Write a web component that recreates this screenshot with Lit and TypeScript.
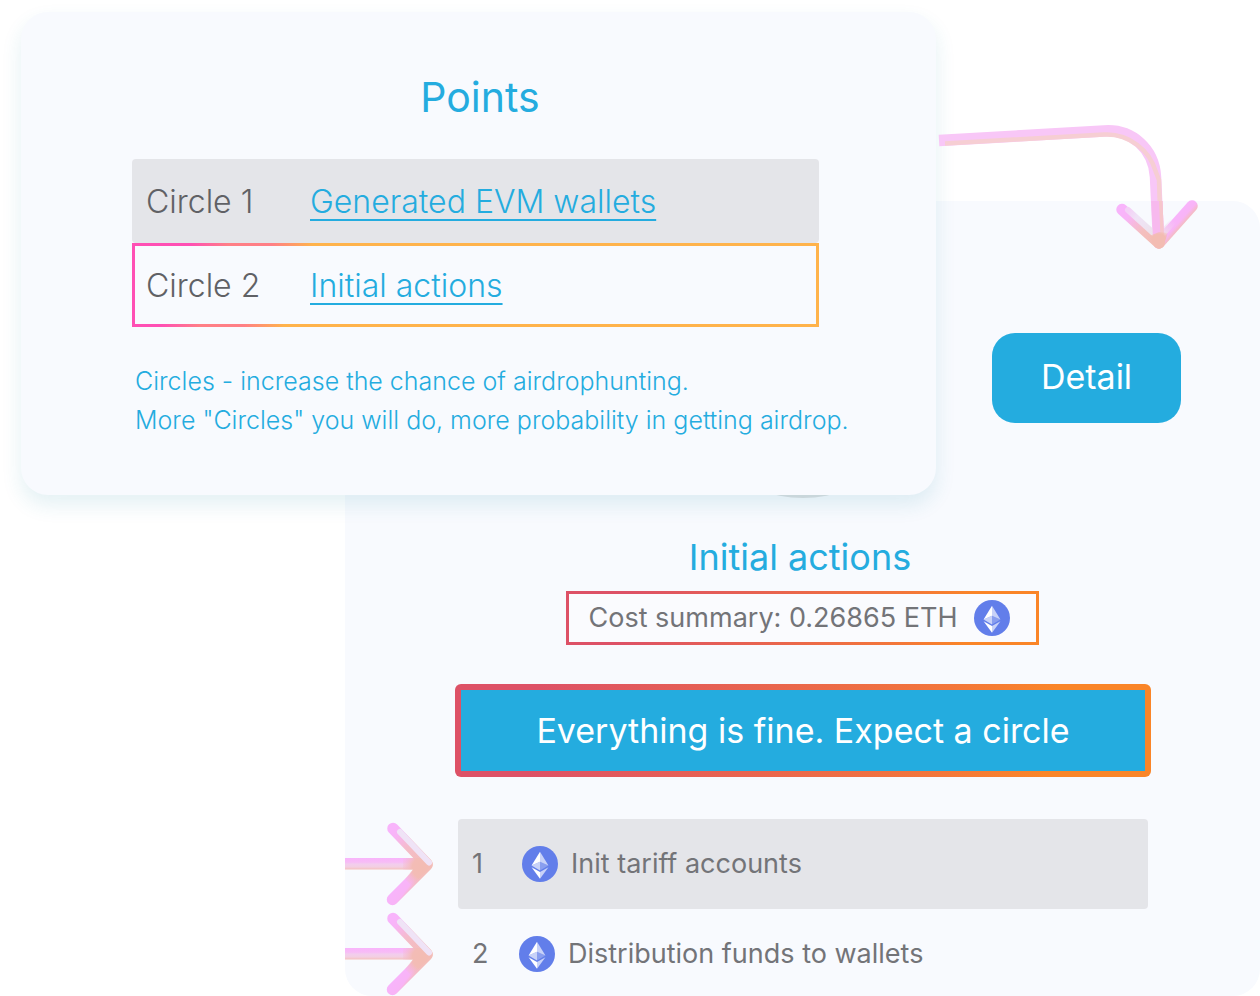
import { LitElement, html, css } from "lit";
import { customElement } from "lit/decorators.js";
import { classMap } from "lit/directives/class-map.js";

interface Circle {
  name: string;
  action: string;
  current: boolean;
}

interface Step {
  label: string;
  active: boolean;
}

const circles: Circle[] = [
  { name: "Circle 1", action: "Generated EVM wallets", current: false },
  { name: "Circle 2", action: "Initial actions", current: true },
];

const steps: Step[] = [
  { label: "Init tariff accounts", active: true },
  { label: "Distribution funds to wallets", active: false },
];

@customElement("eth-icon")
export class EthIcon extends LitElement {
  static styles = css`
    :host {
      display: block;
      flex: none;
      width: 36px;
      height: 36px;
    }
    svg {
      display: block;
      width: 100%;
      height: 100%;
    }
  `;

  render() {
    return html`
      <svg viewBox="0 0 32 32" aria-hidden="true">
        <circle cx="16" cy="16" r="16" fill="#627eea" />
        <g fill="#fff" transform="translate(-0.5 1.2)">
          <path fill-opacity=".65" d="M16.5 4v8.87l7.5 3.35z" />
          <path d="M16.5 4L9 16.22l7.5-3.35z" />
          <path fill-opacity=".65" d="M16.5 21.97v6.03L24 17.62z" />
          <path d="M16.5 28v-6.03L9 17.62z" />
          <path fill-opacity=".25" d="M16.5 20.57l7.5-4.35-7.5-3.35z" />
          <path fill-opacity=".65" d="M9 16.22l7.5 4.35v-7.7z" />
        </g>
      </svg>
    `;
  }
}

/* Short arrow that points from the card edge at a step. */
@customElement("step-arrow")
export class StepArrow extends LitElement {
  static styles = css`
    :host {
      display: block;
    }
    svg {
      display: block;
      width: 113px;
      height: 90px;
    }
  `;

  render() {
    return html`
      <svg viewBox="0 0 113 90" fill="none" aria-hidden="true">
        <defs>
          <linearGradient id="shaft" x1="0" y1="39" x2="0" y2="51" gradientUnits="userSpaceOnUse">
            <stop offset="0" stop-color="#f8b4fb" />
            <stop offset=".35" stop-color="#f7bcf6" />
            <stop offset=".5" stop-color="#f2cdee" />
            <stop offset=".75" stop-color="#f3cfe2" />
            <stop offset="1" stop-color="#f4bdb4" />
          </linearGradient>
          <linearGradient id="upper" x1="48" y1="9" x2="82" y2="46" gradientUnits="userSpaceOnUse">
            <stop offset="0" stop-color="#f8b4fb" />
            <stop offset=".15" stop-color="#f8b4f6" />
            <stop offset=".5" stop-color="#f4bcc8" />
            <stop offset="1" stop-color="#f3bdb8" />
          </linearGradient>
          <linearGradient id="lower" x1="57" y1="60" x2="69" y2="69" gradientUnits="userSpaceOnUse">
            <stop offset="0" stop-color="#f8b4fb" />
            <stop offset=".65" stop-color="#f8b4f6" />
            <stop offset="1" stop-color="#f3bdb8" />
          </linearGradient>
          <radialGradient id="joint" cx="78" cy="49" r="24" gradientUnits="userSpaceOnUse">
            <stop offset="0" stop-color="#f3bcb2" />
            <stop offset=".45" stop-color="#f3bcb6" />
            <stop offset="1" stop-color="#f5b8d8" stop-opacity="0" />
          </radialGradient>
        </defs>
        <path d="M0 39H80V50.500H0z" fill="url(#shaft)" />
        <path d="M47.500 80.500L82 46" stroke="url(#lower)" stroke-width="11.500" stroke-linecap="round" />
        <path d="M48 9.500L82 45" stroke="url(#upper)" stroke-width="11.500" stroke-linecap="round" />
        <path d="M58 39H76L82 40L86 48L67 67L60 60L68 50.500H58z" fill="url(#joint)" />
        <path d="M55 13L84 43.500" stroke="#efe3f6" stroke-width="6" stroke-linecap="round" />
      </svg>
    `;
  }
}

/* Long curved arrow that leads from the points card to the detail card. */
@customElement("flow-arrow")
export class FlowArrow extends LitElement {
  static styles = css`
    :host {
      display: block;
    }
    svg {
      display: block;
      width: 264px;
      height: 135px;
    }
  `;

  render() {
    return html`
      <svg viewBox="936 120 264 135" fill="none" aria-hidden="true">
        <defs>
          <linearGradient id="left" x1="1122" y1="209" x2="1159" y2="243" gradientUnits="userSpaceOnUse">
            <stop offset="0" stop-color="#f8b4fb" />
            <stop offset=".2" stop-color="#f8b4f6" />
            <stop offset=".6" stop-color="#f4bfbf" />
            <stop offset="1" stop-color="#f3bcb2" />
          </linearGradient>
          <linearGradient id="right" x1="1173" y1="219" x2="1182" y2="227" gradientUnits="userSpaceOnUse">
            <stop offset="0" stop-color="#f8b4fb" />
            <stop offset=".55" stop-color="#f8b4f6" />
            <stop offset="1" stop-color="#f3bdb8" />
          </linearGradient>
          <linearGradient id="pale" x1="1128" y1="211" x2="1155" y2="236" gradientUnits="userSpaceOnUse">
            <stop offset="0" stop-color="#f3d0f6" />
            <stop offset=".3" stop-color="#efe3f6" />
            <stop offset="1" stop-color="#ece2ea" />
          </linearGradient>
          <linearGradient id="paleRight" x1="1162" y1="234" x2="1174" y2="220" gradientUnits="userSpaceOnUse">
            <stop offset="0" stop-color="#eedfe4" />
            <stop offset="1" stop-color="#f3d0f6" stop-opacity="0" />
          </linearGradient>
          <radialGradient id="tip" cx="1159" cy="242" r="13" gradientUnits="userSpaceOnUse">
            <stop offset="0" stop-color="#f3bcb2" />
            <stop offset=".6" stop-color="#f3bcb2" />
            <stop offset="1" stop-color="#f3bcb2" stop-opacity="0" />
          </radialGradient>
        </defs>
        <path
          d="M939 140.500L1104 131C1132 129 1154 149 1155.500 177L1158.500 240"
          stroke="#f8c7f7"
          stroke-width="11.500"
        />
        <path
          d="M945 143.500L1104 134.500C1129 133 1150 151 1155.500 171L1159 180L1161 240"
          stroke="#f6ced3"
          stroke-width="4.500"
        />
        <path d="M1192 206L1159 243" stroke="url(#right)" stroke-width="11.500" stroke-linecap="round" />
        <path d="M1122 209.500L1159 243" stroke="url(#left)" stroke-width="11.500" stroke-linecap="round" />
        <path d="M1128 210L1155 234.500" stroke="url(#pale)" stroke-width="6" stroke-linecap="round" />
        <path d="M1162 234L1174 220.500" stroke="url(#paleRight)" stroke-width="7" />
        <path d="M1151.200 201L1162.500 201L1164 238H1153z" fill="#f7b9ee" />
        <path d="M1159 201L1162.500 201L1164 238H1160.500z" fill="#f6c6cb" />
        <path d="M1159 232L1168 233L1163 247Q1159 250 1155 247L1149 236z" fill="url(#tip)" />
      </svg>
    `;
  }
}

@customElement("app-root")
export class AppRoot extends LitElement {
  static styles = css`
    :host {
      display: block;
      min-height: 100vh;
      background: #fff;
      color: #737478;
      font-family: Inter, "Open Sans", sans-serif;
      font-size: 27px;
      font-weight: 400;
      font-optical-sizing: none;
    }
    .stage {
      display: grid;
      align-items: start;
    }
    .stage > * {
      grid-area: 1 / 1;
    }
    .card {
      box-sizing: border-box;
      border-radius: 27px;
      background: #f8fafe;
    }

    .points {
      margin: 12px 324px 0 21px;
      padding: 60px 0 55px;
      box-shadow: 0 10px 20px rgba(36, 140, 165, 0.12);
    }
    .title {
      margin: 0;
      text-align: center;
      color: #24acdf;
      font-weight: 400;
    }
    .points .title {
      padding-left: 3px;
      font-size: 41px;
      line-height: 50px;
    }
    .circles {
      display: block;
      margin: 37px 117px 0 111px;
      color: #606165;
      font-size: 32px;
    }
    .circles tbody {
      display: block;
    }
    .circle {
      box-sizing: border-box;
      display: grid;
      grid-template-columns: 164px 1fr;
      align-items: center;
      height: 84px;
      padding: 0 14px;
      border-radius: 4px;
      background: #e4e5e9;
    }
    .circle.current {
      padding: 0 11px;
      border: 3px solid;
      border-image: linear-gradient(109deg, #ff4fb4 53px, #ff7f86 90px, #ff7f86 131px, #ffb34b 170px) 1;
      background: none;
    }
    .circle th,
    .circle td {
      padding: 0;
      text-align: left;
      font-weight: 300;
    }
    .circle a {
      color: #24acdf;
      text-decoration: underline;
      text-decoration-thickness: 2px;
      text-underline-offset: 6px;
    }
    .note {
      margin: 35px 60px 0 114px;
      color: #24acdf;
      font-size: 25px;
      font-weight: 300;
      line-height: 39px;
    }

    .detail {
      margin: 201px 0 0 345px;
      padding-top: 57px;
    }
    .head {
      display: grid;
      grid-template-columns: 1fr auto 1fr;
    }
    .avatar {
      grid-column: 2;
      width: 240px;
      height: 240px;
      border-radius: 50%;
      background: #dcdfe2;
    }
    button {
      font: inherit;
      font-size: 34px;
      color: #fff;
      cursor: pointer;
    }
    .open {
      justify-self: end;
      width: 189px;
      height: 90px;
      margin: 75px 79px 0 0;
      padding: 0 0 3px;
      border: 0;
      border-radius: 23px;
      background: #24acdf;
    }
    .detail .title {
      margin-top: 37px;
      padding-right: 5px;
      font-size: 36px;
      line-height: 44px;
    }
    .cost {
      box-sizing: border-box;
      display: flex;
      align-items: center;
      gap: 17px;
      width: fit-content;
      height: 54px;
      margin: 12px auto 0;
      padding: 0 26px 0 20px;
      border: 3px solid;
      border-image: linear-gradient(100deg, #dd5166 12%, #e9654d 45%, #f3763a 70%, #fa8528 85%) 1;
      background: #fafbfe;
    }
    .cost span,
    .row span {
      padding-bottom: 2px;
    }
    .status {
      box-sizing: border-box;
      display: block;
      width: calc(100% - 219px);
      height: 93px;
      margin: 39px 109px 0 110px;
      border: 6px solid transparent;
      border-radius: 6px;
      background:
        linear-gradient(#24acdf, #24acdf) padding-box,
        linear-gradient(98deg, #dd5166 12%, #e9654d 45%, #f3763a 70%, #fa8528 85%) border-box;
    }
    .steps {
      margin: 42px 112px -3px 0;
      padding: 0;
      list-style: none;
    }
    .step {
      display: grid;
      grid-template-columns: 113px 1fr;
    }
    .row {
      display: grid;
      grid-template-columns: 47px 36px 1fr;
      align-items: center;
      padding-left: 14px;
      border-radius: 4px;
    }
    .row.active {
      grid-template-columns: 50px 36px 1fr;
      background: #e4e5e9;
    }
    .row .label {
      padding-left: 13px;
    }

    .flow {
      justify-self: end;
      margin: 120px 60px 0 0;
    }
  `;

  render() {
    return html`
      <main class="stage">
        <section class="card detail">
          <div class="head">
            <div class="avatar"></div>
            <button class="open" type="button">Detail</button>
          </div>
          <h2 class="title">Initial actions</h2>
          <div class="cost"><span>Cost summary: 0.26865 ETH</span><eth-icon></eth-icon></div>
          <button class="status" type="button">Everything is fine. Expect a circle</button>
          <ol class="steps">
            ${steps.map(
              (step, i) => html`
                <li class="step">
                  <step-arrow></step-arrow>
                  <div class=${classMap({ row: true, active: step.active })}>
                    <span>${i + 1}</span>
                    <eth-icon></eth-icon>
                    <span class="label">${step.label}</span>
                  </div>
                </li>
              `,
            )}
          </ol>
        </section>

        <section class="card points">
          <h1 class="title">Points</h1>
          <table class="circles">
            <tbody>
              ${circles.map(
                (circle) => html`
                  <tr class=${classMap({ circle: true, current: circle.current })}>
                    <th scope="row">${circle.name}</th>
                    <td><a href="#">${circle.action}</a></td>
                  </tr>
                `,
              )}
            </tbody>
          </table>
          <p class="note">
            Circles - increase the chance of airdrophunting.<br />
            More "Circles" you will do, more probability in getting airdrop.
          </p>
        </section>

        <flow-arrow class="flow"></flow-arrow>
      </main>
    `;
  }
}
